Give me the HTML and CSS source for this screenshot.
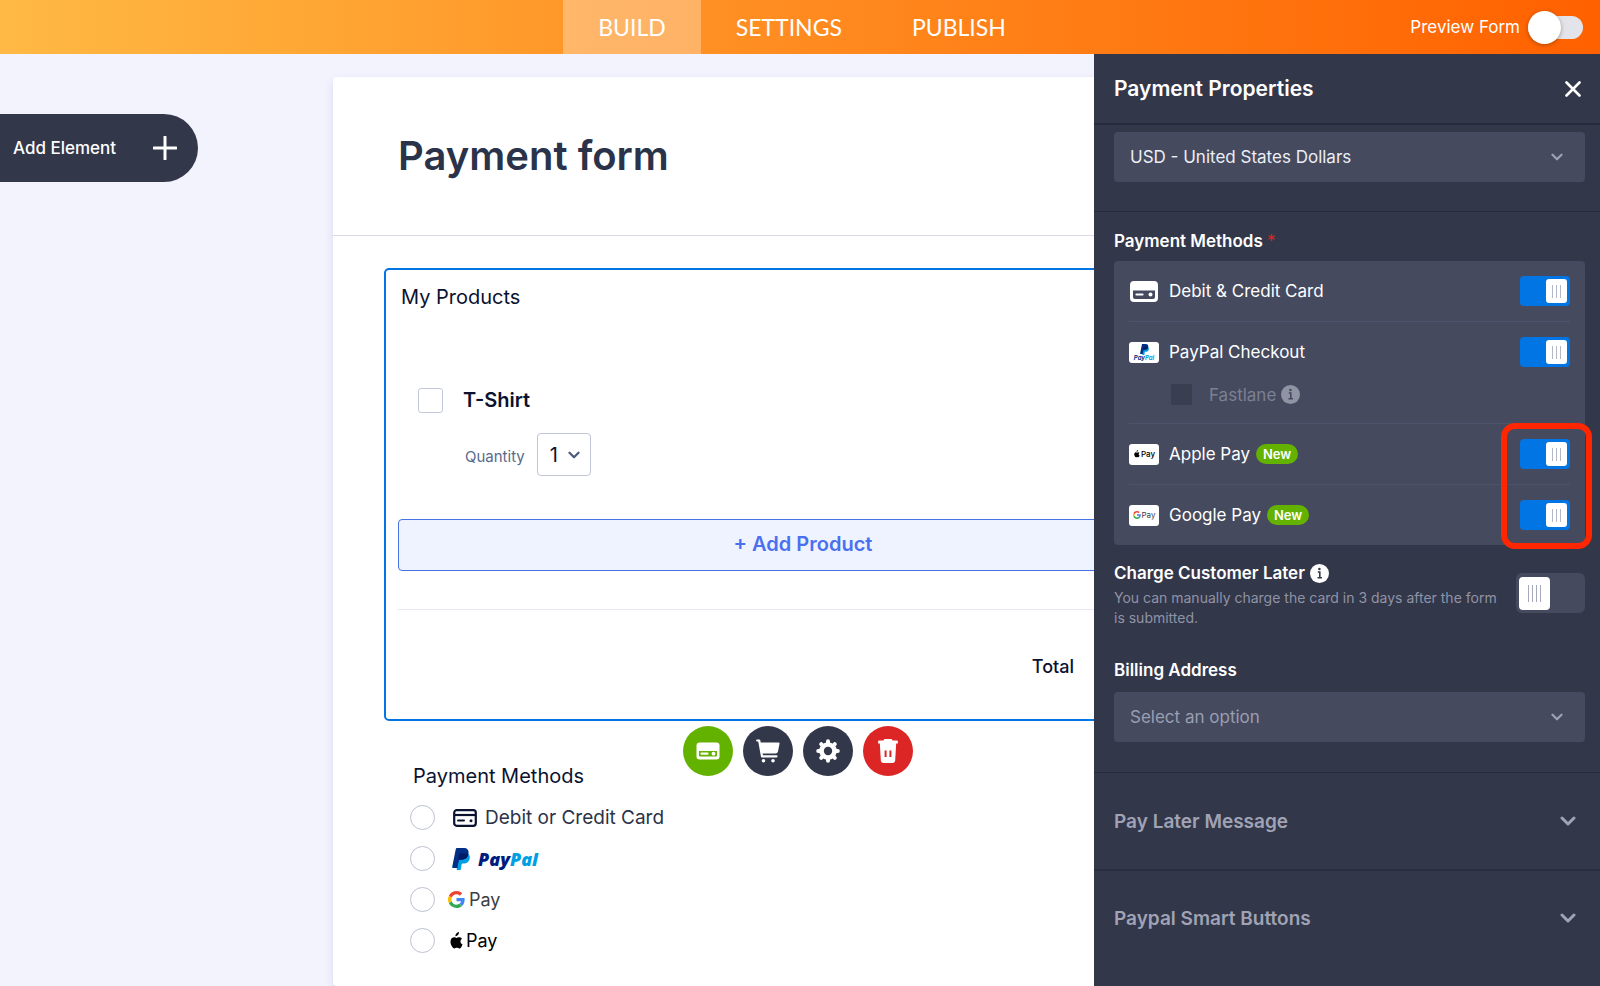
FILE: index.html
```html
<!DOCTYPE html>
<html lang="en">
<head>
<meta charset="utf-8">
<title>Payment form</title>
<link rel="stylesheet" href="styles.css">
</head>
<body>
<svg class="defs" aria-hidden="true">
  <symbol id="chevron" viewBox="0 0 16 10"><path d="M2 2l6 6 6-6" fill="none" stroke="currentColor" stroke-width="3" stroke-linecap="round" stroke-linejoin="round"/></symbol>
  <symbol id="paypal" viewBox="0 0 18 22">
    <path d="M15.6 5.6c2 1 2.600 2.800 2 5.200-.8 3.600-3 4.800-6.200 4.800h-.9c-.5 0-.8.3-.9.8l-.7 4.800c-.1.500-.4.800-.9.800H4.600l1.600-10.400z" fill="#009fe3"/>
    <path d="M3.800.9C3.900.3 4.300 0 4.900 0h6.600c3.700 0 5.600 2 5 5.600-.7 4.200-3.200 6.100-7.200 6.100H7.700c-.6 0-1 .4-1.100 1L5.500 20H.9c-.6 0-.8-.3-.7-.9z" fill="#012f86"/>
    <path d="M6.700 6.400c.1-.6.500-.9 1-.9h5c1.500 0 2.800.1 3.700.6-.8 3.900-3.300 5.600-7.100 5.600H7.700c-.6 0-1 .4-1.100 1L6 15.400z" fill="#001c64"/>
  </symbol>
  <symbol id="google" viewBox="0 0 48 48">
    <path fill="#ea4335" d="M24 9.500c3.500 0 6.700 1.200 9.200 3.600l6.900-6.900C35.900 2.400 30.500 0 24 0 14.600 0 6.500 5.400 2.600 13.200l8 6.200C12.400 13.700 17.700 9.500 24 9.500z"/>
    <path fill="#4285f4" d="M47 24.600c0-1.600-.2-3.100-.4-4.600H24v9h12.900c-.6 3-2.200 5.500-4.700 7.200l7.700 6c4.500-4.200 7.100-10.400 7.100-17.600z"/>
    <path fill="#fbbc05" d="M10.500 28.600A14.500 14.500 0 0 1 10.500 19.400l-7.900-6.200a24 24 0 0 0 0 21.600z"/>
    <path fill="#34a853" d="M24 48c6.500 0 11.900-2.100 15.900-5.800l-7.700-6c-2.200 1.400-4.900 2.300-8.200 2.300-6.300 0-11.600-4.200-13.500-9.900l-7.900 6.200C6.500 42.600 14.600 48 24 48z"/>
  </symbol>
  <symbol id="apple" viewBox="0 0 20 24">
    <path fill="currentColor" d="M13.500 3.800C14.300 2.800 14.800 1.400 14.700 0c-1.300.1-2.700.9-3.500 1.900-.8.900-1.500 2.300-1.300 3.600 1.400.1 2.800-.7 3.600-1.700zM16.600 12.700c0-2.400 2-3.600 2.100-3.700-1.200-1.700-3-1.900-3.600-2-1.500-.1-3 .9-3.700.9-.8 0-2-.9-3.200-.9-1.700 0-3.200 1-4.100 2.500-1.700 3-.4 7.500 1.300 9.900.8 1.200 1.800 2.600 3.100 2.500 1.300 0 1.700-.8 3.200-.8s1.900.8 3.300.8c1.300 0 2.200-1.200 3-2.400.9-1.400 1.300-2.700 1.400-2.800-.1 0-2.800-1.100-2.800-4z"/>
  </symbol>
</svg>

<header class="topbar">
  <nav class="tabs">
    <a class="tab tab-active" href="#build">BUILD</a>
    <a class="tab" href="#settings">SETTINGS</a>
    <a class="tab" href="#publish">PUBLISH</a>
  </nav>
  <label class="preview">Preview Form <input class="preview-switch" type="checkbox"></label>
</header>

<main class="canvas">
  <button class="add-element" type="button">Add Element
    <svg width="24" height="24" viewBox="0 0 24 24"><path d="M12 1v22M1 12h22" stroke="#fff" stroke-width="3" stroke-linecap="round"/></svg>
  </button>

  <form class="sheet">
    <div class="sheet-head"><h1>Payment form</h1></div>

    <section class="products">
      <h2 class="field-title">My Products</h2>
      <div class="product">
        <input class="box" type="checkbox" id="tshirt">
        <div class="product-info">
          <label class="product-name" for="tshirt">T-Shirt</label>
          <div class="quantity">
            <label for="qty">Quantity</label>
            <span class="qty-wrap">
              <select id="qty"><option>1</option><option>2</option></select>
              <svg class="qty-arrow"><use href="#chevron"/></svg>
            </span>
          </div>
        </div>
      </div>
      <button class="add-product" type="button">+ Add Product</button>
      <div class="total">Total</div>
      <div class="tools">
        <button class="tool tool-green" type="button" aria-label="Payment">
          <svg width="24" height="18" viewBox="0 0 24 18"><rect x=".5" y=".5" width="23" height="17" rx="3" fill="#fff"/><path d="M3 9h18v4.500a1 1 0 0 1-1 1H4a1 1 0 0 1-1-1z" fill="#64b200"/><path d="M5.500 11.700h6" stroke="#fff" stroke-width="2.200" stroke-linecap="round"/><circle cx="17.500" cy="11.700" r="1.900" fill="#fff"/></svg>
        </button>
        <button class="tool" type="button" aria-label="Cart">
          <svg width="24" height="24" viewBox="0 0 24 24"><path d="M1.200 1.500h2L6 17.300h14.500" fill="none" stroke="#fff" stroke-width="2.200" stroke-linecap="round" stroke-linejoin="round"/><path d="M4 3.500h18.500a1 1 0 0 1 1 1.300L22 12.500a2.500 2.500 0 0 1-2.400 2H5.500z" fill="#fff"/><circle cx="7.500" cy="21.800" r="1.800" fill="#fff"/><circle cx="17" cy="21.800" r="1.800" fill="#fff"/></svg>
        </button>
        <button class="tool" type="button" aria-label="Settings">
          <svg width="24" height="24" viewBox="0 0 24 24"><g stroke="#fff" stroke-width="4" stroke-linecap="round"><path d="M12 2.200v19.600M2.200 12h19.600M5.200 5.200l13.600 13.600M18.800 5.200L5.200 18.800"/></g><circle cx="12" cy="12" r="8.800" fill="#fff"/><circle cx="12" cy="12" r="4.200" fill="#33374a"/></svg>
        </button>
        <button class="tool tool-red" type="button" aria-label="Delete">
          <svg width="20" height="24" viewBox="0 0 20 24"><path fill="#fff" d="M6.500 0h7l1.200 1.500h4.100a1.100 1.100 0 0 1 1.100 1.100V4.500H.1V2.600a1.100 1.100 0 0 1 1.100-1.100h4.100zM1.800 4h16.400l-1 17a3 3 0 0 1-3 3H5.800a3 3 0 0 1-3-3z"/><path d="M7.600 11.500v6.500M12.400 11.500v6.500" stroke="#dc2626" stroke-width="2"/></svg>
        </button>
      </div>
    </section>

    <fieldset class="methods">
      <legend class="field-title">Payment Methods</legend>
      <label class="method"><input type="radio" name="pm">
        <span class="brand brand-card"><svg width="24" height="18" viewBox="0 0 24 18"><rect x="1.200" y="1.200" width="21.600" height="15.600" rx="2.500" fill="none" stroke="#0a1230" stroke-width="2.200"/><path d="M1 6h22" stroke="#0a1230" stroke-width="2.200"/><path d="M5 11.500h6" stroke="#0a1230" stroke-width="2" stroke-linecap="round"/><circle cx="18" cy="11.800" r="1.500" fill="#0a1230"/></svg>Debit or Credit Card</span></label>
      <label class="method"><input type="radio" name="pm">
        <span class="brand brand-paypal"><svg width="18" height="22"><use href="#paypal"/></svg><b>Pay<i>Pal</i></b></span></label>
      <label class="method"><input type="radio" name="pm">
        <span class="brand brand-google"><svg width="17" height="17"><use href="#google"/></svg>Pay</span></label>
      <label class="method"><input type="radio" name="pm">
        <span class="brand brand-apple"><svg width="15" height="18"><use href="#apple"/></svg>Pay</span></label>
    </fieldset>
  </form>

  <aside class="panel">
    <div class="panel-head">
      <h2>Payment Properties</h2>
      <button class="close" type="button" aria-label="Close"><svg width="16" height="16" viewBox="0 0 16 16"><path d="M1.500 1.500l13 13M14.500 1.500l-13 13" stroke="#fff" stroke-width="2.600" stroke-linecap="round"/></svg></button>
    </div>

    <div class="block block-currency">
      <div class="picker">
        <select aria-label="Currency"><option>USD - United States Dollars</option></select>
        <svg class="arrow"><use href="#chevron"/></svg>
      </div>
    </div>

    <div class="block block-methods">
      <h3>Payment Methods <span class="required">*</span></h3>
      <ul class="gateways">
        <li>
          <div class="gateway">
            <svg class="gateway-card" width="30" height="21" viewBox="0 0 30 21"><rect x="1" width="28" height="21" rx="4" fill="#fff"/><path d="M4 9.500h22V16a2 2 0 0 1-2 2H6a2 2 0 0 1-2-2z" fill="#454a5f"/><path d="M7.500 13.500h6" stroke="#fff" stroke-width="2.200" stroke-linecap="round"/><circle cx="21.500" cy="13.500" r="2" fill="#fff"/></svg>
            <label for="g1">Debit &amp; Credit Card</label><input class="switch" type="checkbox" id="g1" checked>
          </div>
        </li>
        <li>
          <div class="gateway">
            <span class="chip chip-paypal"><svg width="9" height="11"><use href="#paypal"/></svg><b>Pay<i>Pal</i></b></span>
            <label for="g2">PayPal Checkout</label><input class="switch" type="checkbox" id="g2" checked>
          </div>
          <label class="fastlane"><input type="checkbox" disabled> Fastlane
            <svg width="19" height="19" viewBox="0 0 19 19"><circle cx="9.500" cy="9.500" r="9.500" fill="#9093a3"/><path d="M7.800 8h2v5.500M7.500 13.800h4.500" fill="none" stroke="#454a5f" stroke-width="1.600"/><circle cx="9.400" cy="5" r="1.300" fill="#454a5f"/></svg>
          </label>
        </li>
        <li>
          <div class="gateway">
            <span class="chip chip-apple"><svg width="7" height="8"><use href="#apple"/></svg>Pay</span>
            <label for="g3">Apple Pay</label><span class="new">New</span><input class="switch" type="checkbox" id="g3" checked>
          </div>
        </li>
        <li>
          <div class="gateway">
            <span class="chip chip-google"><svg width="8" height="8"><use href="#google"/></svg>Pay</span>
            <label for="g4">Google Pay</label><span class="new">New</span><input class="switch" type="checkbox" id="g4" checked>
          </div>
        </li>
      </ul>

      <div class="charge">
        <div class="charge-text">
          <label for="later">Charge Customer Later
            <svg width="19" height="19" viewBox="0 0 19 19"><circle cx="9.500" cy="9.500" r="9.500" fill="#fff"/><path d="M7.800 8h2v5.500M7.500 13.800h4.500" fill="none" stroke="#33374a" stroke-width="1.600"/><circle cx="9.400" cy="5" r="1.300" fill="#33374a"/></svg>
          </label>
          <p>You can manually charge the card in 3 days after the form is submitted.</p>
        </div>
        <input class="switch switch-large" type="checkbox" id="later">
      </div>

      <label class="billing-label" for="billing">Billing Address</label>
      <div class="picker picker-empty">
        <select id="billing"><option>Select an option</option></select>
        <svg class="arrow"><use href="#chevron"/></svg>
      </div>
    </div>

    <button class="accordion" type="button">Pay Later Message<svg width="16" height="10"><use href="#chevron"/></svg></button>
    <button class="accordion" type="button">Paypal Smart Buttons<svg width="16" height="10"><use href="#chevron"/></svg></button>
  </aside>
</main>
</body>
</html>
```
FILE: styles.css
```css
*, *::before, *::after { box-sizing: border-box; }
body {
  margin: 0;
  height: 100vh;
  display: flex;
  flex-direction: column;
  overflow: hidden;
  background: #f3f3fe;
  font-family: Inter, "Liberation Sans", sans-serif;
  font-size: 17px;
  color: #0a1230;
}
h1, h2, h3, p, ul, fieldset, legend { margin: 0; padding: 0; border: 0; }
ul { list-style: none; }
button, select, input { font: inherit; color: inherit; margin: 0; }
button { border: 0; cursor: pointer; }
svg { display: block; flex: none; }
select, input { appearance: none; }
.defs { position: absolute; width: 0; height: 0; }

/* Top bar */
.topbar {
  flex: none;
  height: 54px;
  display: grid;
  grid-template-columns: 1fr auto 1fr;
  background: linear-gradient(90deg, #ffb944, #ff992a 34%, #ff7c14 68%, #ff6100);
  color: #fff;
}
.tabs { grid-column: 2; display: flex; padding-left: 4px; }
.tab {
  display: flex;
  align-items: center;
  padding: 0 35px 1px;
  font-family: Lato, sans-serif;
  font-size: 23px;
  color: #fff;
  text-decoration: none;
}
.tab-active { background: rgba(255, 255, 255, .3); }
.preview {
  justify-self: end;
  display: flex;
  align-items: center;
  gap: 8px;
  padding-right: 17px;
  font-size: 17px;
}
.preview-switch {
  position: relative;
  width: 55px;
  height: 23px;
  border-radius: 12px;
  background: #e3e4ea;
}
.preview-switch::before {
  content: "";
  position: absolute;
  left: 0;
  top: -5px;
  width: 33px;
  height: 33px;
  border-radius: 50%;
  background: #fff;
  box-shadow: 0 1px 4px rgba(60, 30, 0, .4);
}

/* Canvas */
.canvas {
  position: relative;
  flex: 1;
  min-height: 0;
  padding: 23px 0 0 6px;
  overflow: hidden;
}
.add-element {
  position: absolute;
  left: 0;
  top: 60px;
  height: 68px;
  width: 198px;
  padding: 0 21px 0 13px;
  display: flex;
  align-items: center;
  justify-content: space-between;
  border-radius: 0 34px 34px 0;
  background: #33374a;
  color: #fff;
  font-weight: 500;
}
.sheet {
  width: 940px;
  min-height: 100%;
  margin: 0 auto;
  border-radius: 4px;
  background: #fff;
  box-shadow: 0 4px 8px rgba(80, 80, 160, .16);
}
.sheet-head { padding: 54px 65px 55px; border-bottom: 1px solid #d9dae4; }
h1 { font-size: 40px; line-height: 49px; font-weight: 600; color: #2a3349; }

.products {
  position: relative;
  margin: 32px 51px 0;
  padding: 15px 12px 0;
  height: 453px;
  border: 2px solid #0075e3;
  border-radius: 5px;
}
.field-title { font-size: 20px; line-height: 24px; font-weight: 400; }
.products .field-title { padding-left: 3px; }
.product { display: flex; gap: 20px; margin-top: 79px; padding-left: 20px; }
.box {
  width: 25px;
  height: 25px;
  border: 1px solid #c3c9dc;
  border-radius: 3px;
  background: #fff;
}
.product-name { font-size: 20px; line-height: 25px; font-weight: 600; }
.quantity { display: flex; align-items: center; gap: 12px; margin-top: 20px; padding-left: 2px; font-size: 15px; color: #59698c; }
.quantity label { padding-top: 3px; }
.qty-wrap { position: relative; }
.qty-wrap select {
  display: block;
  width: 54px;
  height: 43px;
  padding: 0 12px;
  border: 1px solid #c1c5d5;
  border-radius: 4px;
  background: #fff;
  color: #0a1230;
  font-size: 20px;
}
.qty-arrow { position: absolute; right: 11px; top: 18px; width: 12px; height: 8px; color: #4c5b80; pointer-events: none; }
.add-product {
  display: block;
  width: 100%;
  height: 52px;
  margin-top: 43px;
  padding-bottom: 3px;
  border: 1px solid #4573e3;
  border-radius: 4px;
  background: #eff3ff;
  color: #4a70f0;
  font-size: 20px;
  font-weight: 600;
}
.total {
  margin-top: 38px;
  padding: 46px 134px 0 0;
  border-top: 1px solid #e7e8f1;
  text-align: right;
  font-size: 18px;
  line-height: 22px;
  font-weight: 500;
}
.tools { position: absolute; left: 297px; top: 456px; display: flex; gap: 10px; }
.tool {
  width: 50px;
  height: 50px;
  padding: 0;
  display: grid;
  place-items: center;
  border-radius: 50%;
  background: #33374a;
}
.tool-green { background: #64b200; }
.tool-red { background: #dc2626; }

.methods { margin: 43px 77px 0; }
.methods legend { padding-left: 3px; margin-bottom: 9px; }
.method { display: flex; align-items: center; height: 41px; }
.method input { width: 25px; height: 25px; border: 1px solid #bcc1d3; border-radius: 50%; }
.brand { display: flex; align-items: center; margin-left: 13px; font-size: 18px; }
.brand-card { gap: 8px; padding-left: 5px; font-size: 19px; color: #2a3349; }
.brand-paypal { gap: 8px; padding-left: 4px; font-family: "Open Sans", sans-serif; font-style: italic; color: #001c7c; }
.brand-paypal b { font-weight: 800; }
.brand-paypal i { color: #009fe3; }
.brand-google { gap: 4px; color: #3c4043; }
.brand-apple { gap: 3px; color: #000; }

/* Side panel */
.panel {
  position: absolute;
  top: 0;
  right: 0;
  bottom: 0;
  width: 506px;
  background: #33374a;
  color: #fff;
}
.panel-head {
  height: 71px;
  padding: 0 19px 0 20px;
  display: flex;
  align-items: center;
  justify-content: space-between;
  border-bottom: 2px solid #272a3a;
}
.panel-head h2 { font-size: 21px; font-weight: 600; }
.close { padding: 0; background: none; }
.block { padding: 0 15px 0 20px; border-bottom: 1px solid #272a3a; }
.block-currency { padding-top: 7px; padding-bottom: 29px; }
.picker { position: relative; }
.picker select {
  display: block;
  width: 100%;
  height: 50px;
  padding: 0 16px;
  border: 0;
  border-radius: 4px;
  background: #454a5f;
  color: #eceef5;
}
.picker-empty select { color: #9a9eb0; }
.arrow { position: absolute; right: 22px; top: 21px; width: 12px; height: 8px; color: #9ca0b5; pointer-events: none; }
h3, .charge label, .billing-label { font-size: 17px; line-height: 22px; font-weight: 600; }
h3 { padding-top: 18px; margin-bottom: 9px; }
.required { color: #dc2626; font-weight: 400; }
.gateways { position: relative; padding: 0 15px; border-radius: 4px; background: #454a5f; }
.gateways::after {
  content: "";
  position: absolute;
  right: -7px;
  bottom: -4px;
  width: 91px;
  height: 126px;
  border: 6px solid #ff2600;
  border-radius: 14px;
  pointer-events: none;
}
.gateways li { padding: 15px 0; }
.gateways li + li { border-top: 1px solid #4c546d; }
.gateway { display: flex; align-items: center; height: 30px; }
.gateway label { margin-left: 10px; }
.switch {
  position: relative;
  flex: none;
  margin-left: auto;
  width: 50px;
  height: 30px;
  border-radius: 4px;
  background: #0075e3;
}
.switch::before {
  content: "";
  position: absolute;
  right: 3px;
  top: 3px;
  width: 21px;
  height: 24px;
  border-radius: 3px;
  background: repeating-linear-gradient(90deg, #b4b7c4 0 1px, transparent 1px 4px) center / 9px 13px no-repeat, #fff;
}
.switch-large { width: 69px; height: 40px; border-radius: 6px; background: #454a5f; }
.switch-large::before {
  left: 3px;
  right: auto;
  top: 4px;
  width: 31px;
  height: 33px;
  border-radius: 4px;
  background: repeating-linear-gradient(90deg, #a6a9ba 0 1px, transparent 1px 4px) center / 13px 17px no-repeat, #fff;
}
.chip {
  width: 30px;
  height: 21px;
  display: flex;
  align-items: center;
  justify-content: center;
  gap: 1px;
  border-radius: 3px;
  background: #fff;
  color: #000;
  font-size: 8px;
  line-height: 8px;
  font-weight: 500;
}
.chip-google { color: #3c4043; font-weight: 400; }
.chip-paypal { flex-direction: column; gap: 0; font-size: 6px; line-height: 6px; font-style: italic; color: #012f86; }
.chip-paypal i { color: #009fe3; }
.new {
  width: 42px;
  margin-left: 6px;
  border-radius: 10px;
  background: #64b200;
  font-size: 13px;
  line-height: 20px;
  font-weight: 600;
  text-align: center;
}
.fastlane { display: flex; align-items: center; height: 21px; margin: 17px 0 3px 42px; color: #7c8093; }
.fastlane input { width: 21px; height: 21px; margin-right: 17px; border-radius: 2px; background: #3a3e51; }
.fastlane svg { margin-left: 5px; }

.charge { display: flex; align-items: flex-start; gap: 14px; margin-top: 17px; }
.charge label { display: flex; align-items: center; gap: 5px; }
.charge-text { flex: 1; }
.charge p { margin-top: 4px; font-size: 14px; line-height: 20px; color: #9093a5; }
.charge .switch { margin: 11px 0 0; }
.billing-label { display: block; margin: 31px 0 11px; }
.block-methods { padding-bottom: 30px; }
.accordion {
  width: 100%;
  height: 96px;
  padding: 0 24px 0 20px;
  display: flex;
  align-items: center;
  justify-content: space-between;
  background: none;
  color: #a0a3b5;
  font-size: 19px;
  font-weight: 600;
}
.accordion + .accordion { border-top: 2px solid #2b2e3f; }
```
